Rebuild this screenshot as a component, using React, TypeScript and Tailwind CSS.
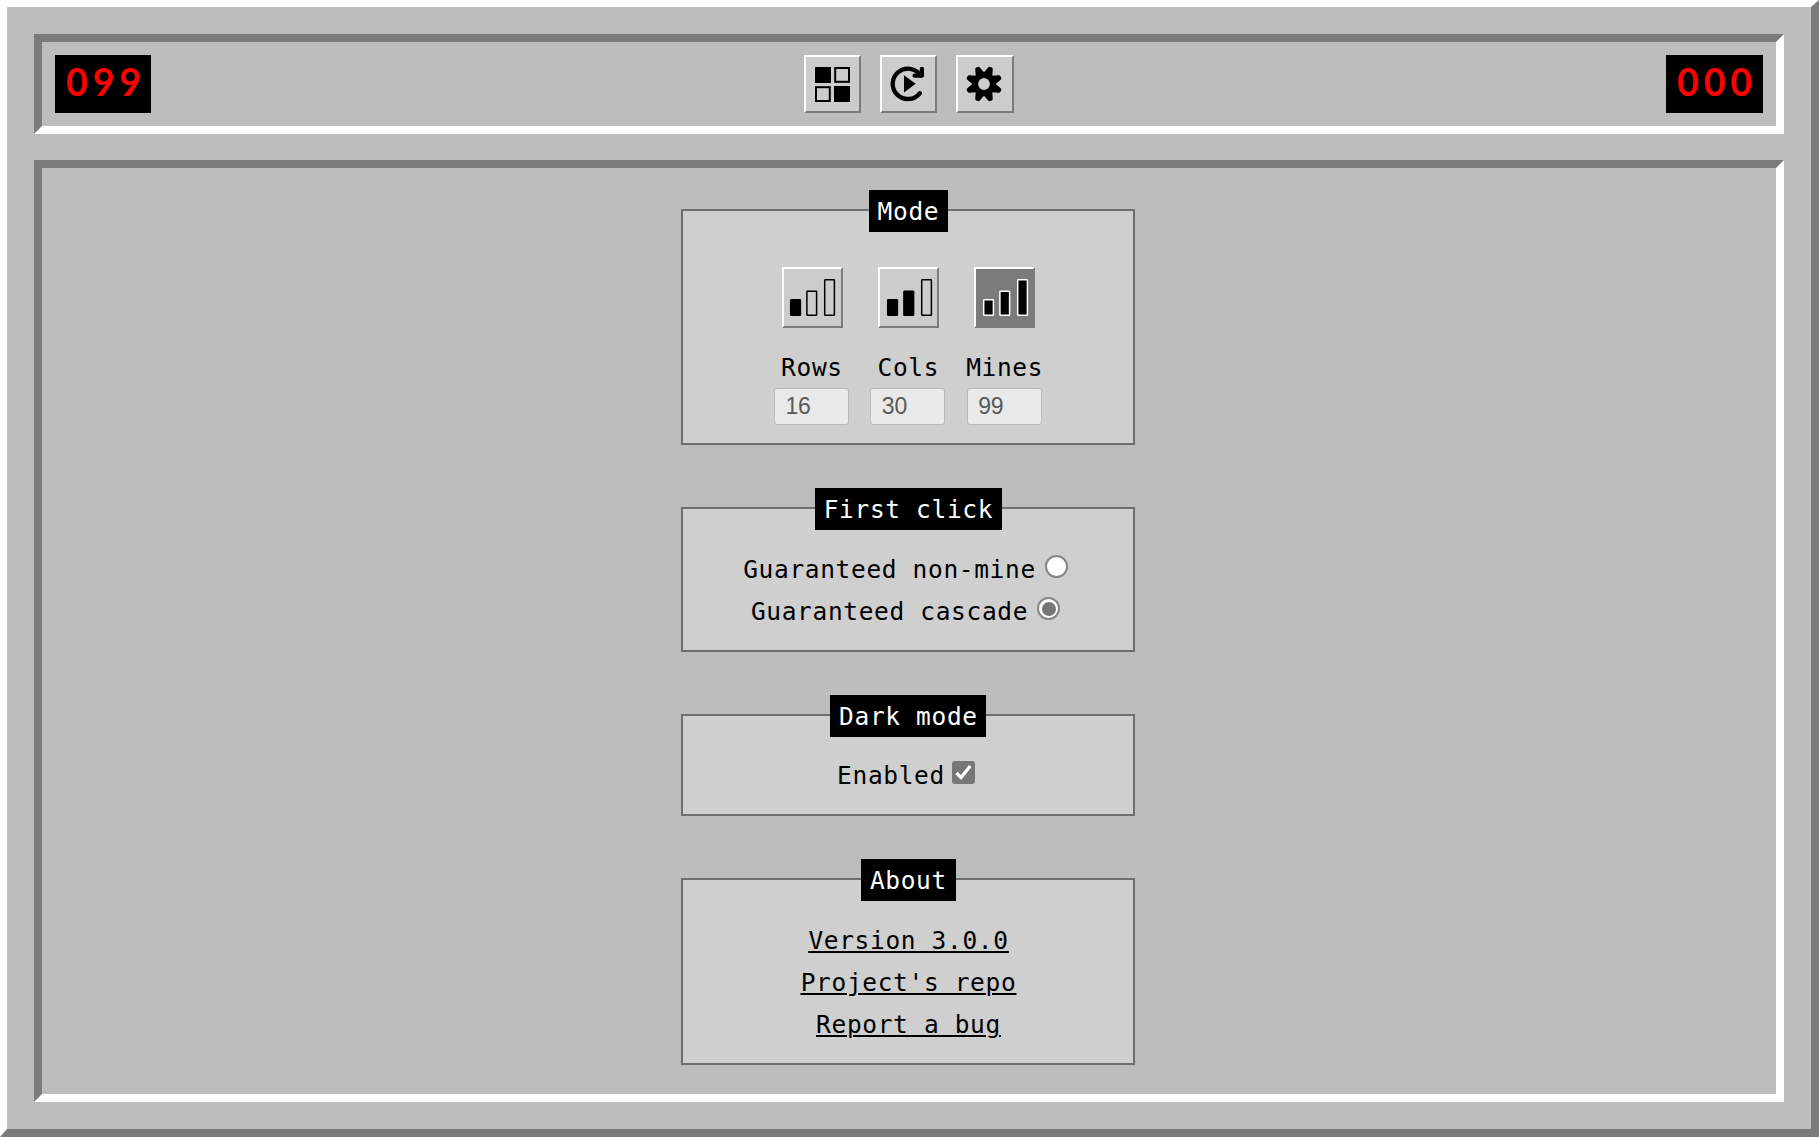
import type { ReactNode } from 'react'

const bevel = 'border-2 border-t-white border-l-white border-r-[#7b7b7b] border-b-[#7b7b7b]'
const inset = 'border-8 border-t-[#7b7b7b] border-l-[#7b7b7b] border-r-white border-b-white'

function Counter({ value }: { value: string }) {
  return (
    <div className="h-[58px] w-[96px] bg-black pl-[11px] font-['Lato',sans-serif] text-[37.5px] font-bold leading-[53px] tracking-[4.9px] text-[#ff0000] last:w-[97px]">
      {value}
    </div>
  )
}

function GridIcon() {
  return (
    <svg width="35" height="35" viewBox="0 0 35 35" stroke="#000" strokeWidth="2">
      <rect x="1" y="1" width="14" height="14" fill="#000" />
      <rect x="20.2" y="1" width="13.8" height="13.8" fill="none" />
      <rect x="1" y="20.2" width="13.8" height="13.8" fill="none" />
      <rect x="20" y="20" width="14" height="14" fill="#000" />
    </svg>
  )
}

function RestartIcon() {
  return (
    <svg width="36" height="36" viewBox="0 0 36 36" fill="none" stroke="#000" strokeWidth="4.3" strokeLinecap="round" strokeLinejoin="round">
      <path d="M29.8 27.3A15.2 15.2 0 1 1 30.6 9.4" />
      <path d="M31.9 3V9.7H24.6" />
      <path d="M14 9.2L25.7 17.8L14 26.6Z" fill="#000" stroke="none" />
    </svg>
  )
}

function GearIcon() {
  return (
    <svg className="-ml-px" width="36" height="36" viewBox="-18 -18 36 36">
      <circle r="8.8" fill="none" stroke="#000" strokeWidth="5.8" />
      {[22.5, 67.5, 112.5, 157.5, 202.5, 247.5, 292.5, 337.5].map((a) => (
        <path key={a} transform={`rotate(${a})`} d="M-4.7 -10.2L-2.6 -16.6Q-2.1 -18.2 -0.8 -18.2H.8Q2.1 -18.2 2.6 -16.6L4.7 -10.2Z" />
      ))}
    </svg>
  )
}

function BarsIcon({ level, x, light = false }: { level: number; x: number; light?: boolean }) {
  const bars = [
    { x: 0, y: 30, h: 17 },
    { x: 16.2, y: 21.5, h: 25.5 },
    { x: 34, y: 10, h: 37 },
  ]
  return (
    <svg width="57" height="57" viewBox="0 0 57 57">
      {bars.map((b, i) => (
        <rect
          key={i}
          x={x + b.x + 0.7}
          y={b.y + 0.7}
          width="9.7"
          height={b.h - 1.4}
          rx=".5"
          fill={i < level ? '#000' : 'none'}
          stroke={light ? '#fff' : '#000'}
          strokeWidth="1.5"
        />
      ))}
    </svg>
  )
}

function Section({ title, className, children }: { title: string; className: string; children: ReactNode }) {
  return (
    <section className={`flex w-[454px] flex-col items-center border-2 border-[#6e6e6e] bg-[#cfcfcf] ${className}`}>
      <h2 className="-mr-[0.4px] -mt-[21px] h-[42px] shrink-0 bg-black pl-[9px] pr-[8.6px] text-white">{title}</h2>
      {children}
    </section>
  )
}

function Field({ label, value }: { label: string; value: string }) {
  return (
    <div className="flex w-[77px] flex-col items-center">
      <span className="-mr-px h-[42px] whitespace-nowrap">{label}</span>
      <div className="h-[37px] w-[75px] rounded-[3px] border border-[#b9b9b9] bg-[#e9e9e9] pl-[10.5px] font-['Liberation_Sans',sans-serif] text-[23px] leading-[34px] tracking-[-0.2px] text-[#5a5a5a]">
        {value}
      </div>
    </div>
  )
}

function Radio({ checked = false }: { checked?: boolean }) {
  return (
    <span className="ml-[9px] mr-[5px] mt-[7px] flex size-[23px] items-center justify-center rounded-full border-2 border-[#868686] bg-white">
      {checked && <span className="size-[14px] rounded-full bg-[#767676]" />}
    </span>
  )
}

export default function App() {
  return (
    <div className="flex h-screen w-full flex-col gap-[26px] overflow-hidden border-b-8 border-l-[7px] border-r-8 border-t-[7px] border-b-[#7b7b7b] border-l-white border-r-[#7b7b7b] border-t-white bg-[#bdbdbd] p-[27px] font-['DejaVu_Sans_Mono',monospace] text-[24.5px] leading-[44px] tracking-[0.65px] text-black">
      <header className={`flex h-[100px] shrink-0 justify-between p-[13px] ${inset}`}>
        <Counter value="099" />
        <div className="flex gap-[19px]">
          <button className={`flex h-[58px] w-[57px] items-center justify-center bg-[#ccc] ${bevel}`}><GridIcon /></button>
          <button className={`flex h-[58px] w-[57px] items-center justify-center bg-[#ccc] ${bevel}`}><RestartIcon /></button>
          <button className={`flex h-[58px] w-[58px] items-center justify-center bg-[#ccc] ${bevel}`}><GearIcon /></button>
        </div>
        <Counter value="000" />
      </header>

      <main className={`flex min-h-0 flex-1 flex-col items-center gap-[62px] pr-[2px] pt-[41px] ${inset}`}>
        <Section title="Mode" className="h-[236px]">
          <div className="mt-[35px] flex gap-[35px]">
            <button className={`size-[61px] bg-[#ccc] ${bevel}`}><BarsIcon level={1} x={6} /></button>
            <button className={`size-[61px] bg-[#ccc] ${bevel}`}><BarsIcon level={2} x={7} /></button>
            <button className={`size-[61px] bg-[#7b7b7b] ${bevel}`}><BarsIcon level={3} x={7} light /></button>
          </div>
          <div className="mr-[0.4px] mt-[18px] flex gap-[19.4px]">
            <Field label="Rows" value="16" />
            <Field label="Cols" value="30" />
            <Field label="Mines" value="99" />
          </div>
        </Section>

        <Section title="First click" className="h-[145px]">
          <label className="mt-[18px] flex h-[42px]">Guaranteed non-mine<Radio /></label>
          <label className="flex h-[42px]">Guaranteed cascade<Radio checked /></label>
        </Section>

        <Section title="Dark mode" className="h-[102px]">
          <label className="mt-[18px] flex h-[42px] leading-[42px]">
            Enabled
            <svg className="ml-[7px] mr-1 mt-[6px]" width="23" height="23" viewBox="0 0 23 23">
              <rect width="23" height="23" rx="3" fill="#767676" />
              <path d="M4.5 12L9 16.5L18.3 5" fill="none" stroke="#fff" strokeWidth="3.2" />
            </svg>
          </label>
        </Section>

        <Section title="About" className="h-[187px]">
          <div className="-mr-px mt-[18px] flex flex-col items-center underline decoration-2 underline-offset-2">
            <a className="h-[42px]" href="#">Version 3.0.0</a>
            <a className="h-[42px]" href="#">Project's repo</a>
            <a className="h-[42px]" href="#">Report a bug</a>
          </div>
        </Section>
      </main>
    </div>
  )
}
